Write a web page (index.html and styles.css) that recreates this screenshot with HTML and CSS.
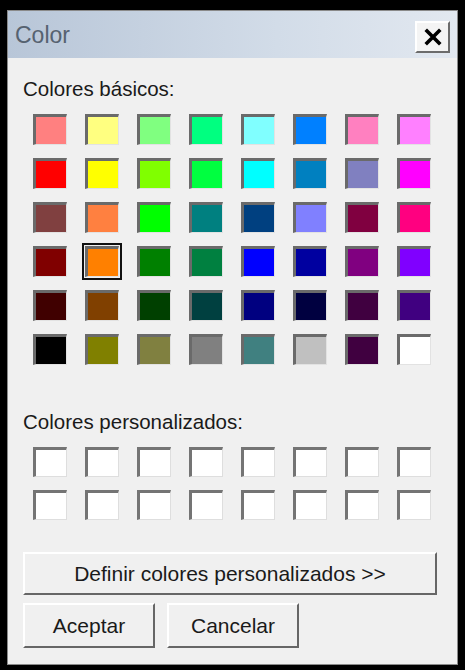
FILE: index.html
```html
<!DOCTYPE html>
<html lang="es">
<head>
    <meta charset="UTF-8">
    <title>Color</title>
    <link rel="stylesheet" href="styles.css">
</head>
<body>
    <div class="dialog">
        <div class="titlebar">
            <span class="title">Color</span>
            <div class="close-btn">
                <svg width="18" height="18" viewBox="0 0 18 18">
                    <path d="M3 3 L15 15 M15 3 L3 15" stroke="#000" stroke-width="3.6" stroke-linecap="square"/>
                </svg>
            </div>
        </div>

        <div class="content">
            <div class="label label-basic">Colores básicos:</div>
            <div class="basic-grid">
                <div class="swatch" style="background:#ff8080"></div>
                <div class="swatch" style="background:#ffff80"></div>
                <div class="swatch" style="background:#80ff80"></div>
                <div class="swatch" style="background:#00ff80"></div>
                <div class="swatch" style="background:#80ffff"></div>
                <div class="swatch" style="background:#0080ff"></div>
                <div class="swatch" style="background:#ff80c0"></div>
                <div class="swatch" style="background:#ff80ff"></div>

                <div class="swatch" style="background:#ff0000"></div>
                <div class="swatch" style="background:#ffff00"></div>
                <div class="swatch" style="background:#80ff00"></div>
                <div class="swatch" style="background:#00ff40"></div>
                <div class="swatch" style="background:#00ffff"></div>
                <div class="swatch" style="background:#0080c0"></div>
                <div class="swatch" style="background:#8080c0"></div>
                <div class="swatch" style="background:#ff00ff"></div>

                <div class="swatch" style="background:#804040"></div>
                <div class="swatch" style="background:#ff8040"></div>
                <div class="swatch" style="background:#00ff00"></div>
                <div class="swatch" style="background:#008080"></div>
                <div class="swatch" style="background:#004080"></div>
                <div class="swatch" style="background:#8080ff"></div>
                <div class="swatch" style="background:#800040"></div>
                <div class="swatch" style="background:#ff0080"></div>

                <div class="swatch" style="background:#800000"></div>
                <div class="swatch selected" style="background:#ff8000"></div>
                <div class="swatch" style="background:#008000"></div>
                <div class="swatch" style="background:#008040"></div>
                <div class="swatch" style="background:#0000ff"></div>
                <div class="swatch" style="background:#0000a0"></div>
                <div class="swatch" style="background:#800080"></div>
                <div class="swatch" style="background:#8000ff"></div>

                <div class="swatch" style="background:#400000"></div>
                <div class="swatch" style="background:#804000"></div>
                <div class="swatch" style="background:#004000"></div>
                <div class="swatch" style="background:#004040"></div>
                <div class="swatch" style="background:#000080"></div>
                <div class="swatch" style="background:#000040"></div>
                <div class="swatch" style="background:#400040"></div>
                <div class="swatch" style="background:#400080"></div>

                <div class="swatch" style="background:#000000"></div>
                <div class="swatch" style="background:#808000"></div>
                <div class="swatch" style="background:#808040"></div>
                <div class="swatch" style="background:#808080"></div>
                <div class="swatch" style="background:#408080"></div>
                <div class="swatch" style="background:#c0c0c0"></div>
                <div class="swatch" style="background:#400040"></div>
                <div class="swatch" style="background:#ffffff"></div>
            </div>

            <div class="label label-custom">Colores personalizados:</div>
            <div class="custom-grid">
                <div class="swatch empty"></div>
                <div class="swatch empty"></div>
                <div class="swatch empty"></div>
                <div class="swatch empty"></div>
                <div class="swatch empty"></div>
                <div class="swatch empty"></div>
                <div class="swatch empty"></div>
                <div class="swatch empty"></div>
                <div class="swatch empty"></div>
                <div class="swatch empty"></div>
                <div class="swatch empty"></div>
                <div class="swatch empty"></div>
                <div class="swatch empty"></div>
                <div class="swatch empty"></div>
                <div class="swatch empty"></div>
                <div class="swatch empty"></div>
            </div>

            <div class="btn btn-define">Definir colores personalizados &gt;&gt;</div>
            <div class="btn-row">
                <div class="btn btn-small">Aceptar</div>
                <div class="btn btn-small">Cancelar</div>
            </div>
        </div>
    </div>
</body>
</html>
```

FILE: styles.css
```css
body {
    margin: 0;
    background-color: #000000;
    font-family: "Liberation Sans", Arial, sans-serif;
}
.dialog {
    box-sizing: border-box;
    width: 451px;
    height: 655px;
    margin: 10px 0 0 7px;
    background: #f0f0f0;
    border: 1px solid #8a8a8a;
    display: flex;
    flex-direction: column;
}
.titlebar {
    height: 47px;
    flex-shrink: 0;
    display: flex;
    align-items: center;
    justify-content: space-between;
    padding: 2px 7px 0 7px;
    box-sizing: border-box;
    background: linear-gradient(to right, #b8c6d8, #d2dce8 60%, #e2e8f0);
}
.title {
    font-size: 23px;
    color: #566270;
}
.close-btn {
    box-sizing: border-box;
    width: 35px;
    height: 32px;
    margin-top: 3px;
    background: #f4f4f4;
    border: 2px solid;
    border-color: #ffffff #6c6c6c #6c6c6c #ffffff;
    display: flex;
    align-items: center;
    justify-content: center;
}
.content {
    padding: 0 0 0 15px;
}
.label {
    font-size: 20.5px;
    color: #1a1a1a;
    line-height: 24px;
}
.label-basic {
    margin-top: 19px;
}
.basic-grid {
    display: grid;
    grid-template-columns: repeat(8, 34px);
    grid-auto-rows: 31px;
    column-gap: 18px;
    row-gap: 13px;
    margin: 13px 0 0 10px;
}
.swatch {
    box-sizing: border-box;
    border-style: solid;
    border-width: 3px 1px 1px 3px;
    border-color: #6a6a6a #e2e2e2 #e2e2e2 #6a6a6a;
}
.swatch.selected {
    outline: 2px solid #111111;
    outline-offset: 1px;
}
.label-custom {
    margin-top: 45px;
}
.custom-grid {
    display: grid;
    grid-template-columns: repeat(8, 34px);
    grid-auto-rows: 30px;
    column-gap: 18px;
    row-gap: 13px;
    margin: 13px 0 0 10px;
}
.swatch.empty {
    background: #ffffff;
    border-color: #747474 #dedede #dedede #747474;
}
.btn {
    box-sizing: border-box;
    background: #f0f0f0;
    border: 2px solid;
    border-color: #ffffff #666666 #666666 #ffffff;
    font-size: 21px;
    color: #1a1a1a;
    display: flex;
    align-items: center;
    justify-content: center;
}
.btn-define {
    width: 414px;
    height: 43px;
    margin-top: 32px;
}
.btn-row {
    display: flex;
    gap: 12px;
    margin-top: 8px;
}
.btn-small {
    width: 132px;
    height: 45px;
}
```
